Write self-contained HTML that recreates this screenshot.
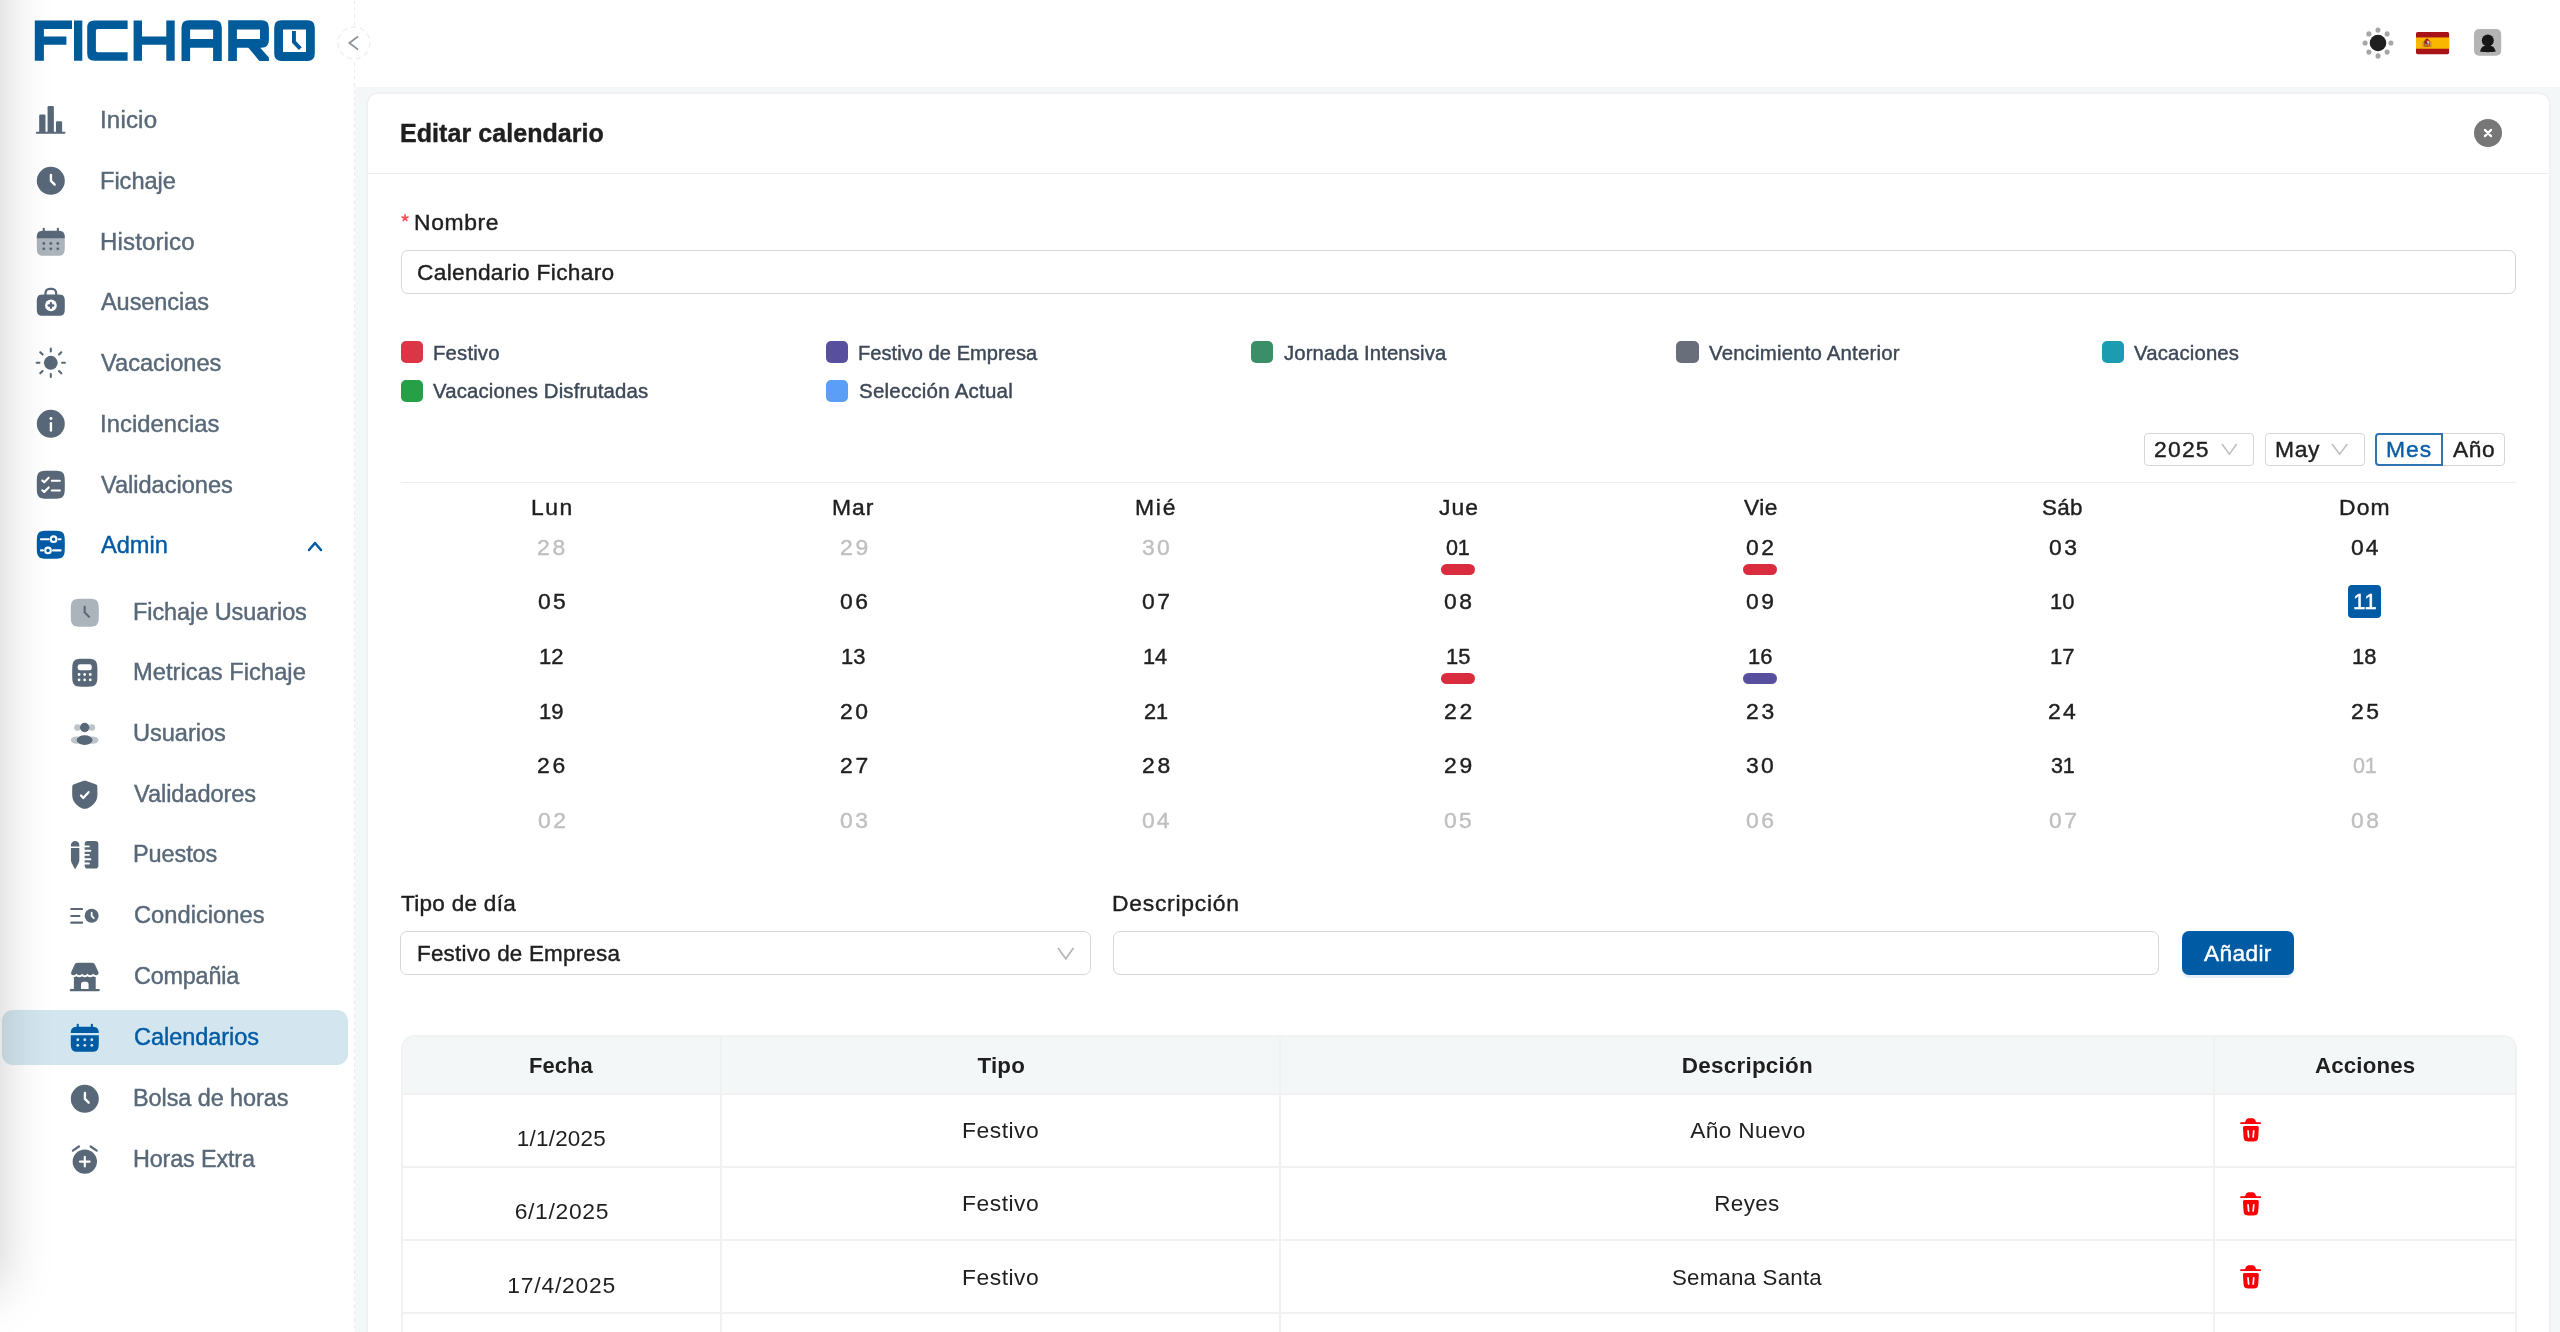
<!DOCTYPE html><html lang="es"><head><meta charset="utf-8"><title>Ficharo - Editar calendario</title><style>
*{box-sizing:border-box;margin:0;padding:0}
html,body{width:2560px;height:1332px;overflow:hidden;background:#fff}
body{position:relative;font-family:"Liberation Sans",sans-serif;color:#1f1f1f}
.abs,.t,.ic,nav li,nav a{position:absolute}
.t{white-space:nowrap;line-height:1;display:block;will-change:transform;-webkit-text-stroke:0.42px}
ul{list-style:none}
a{text-decoration:none;color:inherit}
svg{display:block;overflow:visible}
header.top{position:absolute;left:0;top:0;width:2560px;height:87px;background:#fff}
.sidebg{position:absolute;left:0;top:0;width:355px;height:1332px;background:#fff}
main{position:absolute;left:355px;top:87px;width:2205px;height:1245px;background:#f4f7f8}
aside{position:absolute;left:0;top:0;width:354px;height:1332px}
.dash{position:absolute;left:354px;top:0;width:1px;height:1332px;background:repeating-linear-gradient(to bottom,#ececec 0,#ececec 4px,rgba(255,255,255,.9) 4px,rgba(255,255,255,.9) 6.9px)}
.page{position:absolute;left:0;top:0;width:2560px;height:1332px}
.card{position:absolute;background:#fff;border:2px solid #f1f1f1;border-radius:12px}
.sel{position:absolute;background:#d3e6ef;border-radius:11px}
.inp{position:absolute;background:#fff;border:1px solid #d6d6d6;border-radius:7px}
.sw{position:absolute;border-radius:5px}
.pill{position:absolute;border-radius:6px;height:11px;width:33.8px}
.hr{position:absolute;background:#f0f0f0}
.btn{position:absolute;background:#005ba5;border-radius:7px;box-shadow:0 3px 0 rgba(5,100,200,.10)}
.shade{position:absolute;left:-300px;top:-300px;width:300px;height:1590px;pointer-events:none;box-shadow:0 0 50px rgba(0,0,0,.2)}
table.tb{position:absolute;border-collapse:separate;border-spacing:0;table-layout:fixed;will-change:transform}
table.tb{border-left:2px solid #f1f1f1;border-top:2px solid #f1f1f1;border-radius:14px 14px 0 0}
table.tb th,table.tb td{border-right:2px solid #f1f1f1;border-bottom:2px solid #f1f1f1;text-align:center;vertical-align:top;line-height:1;white-space:nowrap;position:relative}
table.tb th{height:57.5px;background:#f4f7f8;font-weight:700}
table.tb th:first-child{border-top-left-radius:12px}
table.tb th:last-child{border-top-right-radius:12px}
table.tb td{height:73.33px;font-weight:400}
</style></head><body>
<header class="top">
<svg class="ic" style="left:2357.90px;top:22.70px" width="40.00" height="40.00" viewBox="0 0 40 40" ><circle cx="20" cy="20" r="8.3" fill="#1f1f1f"/><circle cx="32.90" cy="20.00" r="2.55" fill="#a6a6a6"/><circle cx="29.12" cy="29.12" r="2.55" fill="#a6a6a6"/><circle cx="20.00" cy="32.90" r="2.55" fill="#a6a6a6"/><circle cx="10.88" cy="29.12" r="2.55" fill="#a6a6a6"/><circle cx="7.10" cy="20.00" r="2.55" fill="#a6a6a6"/><circle cx="10.88" cy="10.88" r="2.55" fill="#a6a6a6"/><circle cx="20.00" cy="7.10" r="2.55" fill="#a6a6a6"/><circle cx="29.12" cy="10.88" r="2.55" fill="#a6a6a6"/></svg>
<svg class="ic" style="left:2416.20px;top:31.80px" width="33.10" height="22.20" viewBox="0 0 33.1 22.2" ><rect width="33.1" height="22.2" rx="1.6" fill="#a8131a"/><rect y="5.44" width="33.1" height="11.32" fill="#fab700"/><g transform="translate(6.6,6.4)"><rect x="1.2" y="1.6" width="6.4" height="7" rx="1.6" fill="#b5521f"/><rect x="2.2" y="2.8" width="2.2" height="2.6" fill="#a8131a"/><rect x="4.4" y="2.8" width="2.2" height="2.6" fill="#d9d2c0"/><rect x="2.2" y="5.4" width="4.4" height="2.4" fill="#c9781f"/><rect x="-0.2" y="3" width="1.3" height="5.8" fill="#c08a4a"/><rect x="7.7" y="3" width="1.3" height="5.8" fill="#c08a4a"/><path d="M2 1.800L4.400 -0.200L6.800 1.800Z" fill="#a8131a"/><rect x="3.5" y="4.2" width="1.8" height="1.8" fill="#51609c"/></g></svg>
<svg class="ic" style="left:2474.30px;top:29.40px" width="27.20" height="26.80" viewBox="0 0 27.2 26.8" ><rect width="27.2" height="26.8" rx="5" fill="#b4b4b4"/><circle cx="13.8" cy="11.5" r="6" fill="#161616"/><path d="M6.1 22.6C6.6 18.4 9.6 16.2 13.8 16.2S21 18.4 21.7 22.6C19 23.4 8.6 23.4 6.1 22.6Z" fill="#161616"/></svg>
</header>
<main></main>
<div class="sidebg"></div><div class="dash"></div>
<section class="page">
<div class="card" style="left:366.00px;top:92.00px;width:2185.00px;height:1300.00px;"></div>
<h1 class="t" style="left:400.23px;top:121px;font-size:25.03px;letter-spacing:0.054px;font-weight:700;">Editar calendario</h1>
<svg class="ic" style="left:2474.10px;top:119.10px" width="28.00" height="28.00" viewBox="0 0 28 28" ><circle cx="14" cy="14" r="14" fill="#777"/><path d="M10.9 10.9L17.1 17.1M17.1 10.9L10.9 17.1" stroke="#fff" stroke-width="2.2" stroke-linecap="round"/></svg>
<div class="hr" style="left:368.00px;top:173.00px;width:2181.00px;height:1.00px;background:#ececec;"></div>
<svg class="ic" style="left:398.90px;top:212.40px" width="12.00" height="12.00" viewBox="0 0 12 12" ><path d="M6 6L6.00 2.30M6 6L9.52 4.86M6 6L8.17 8.99M6 6L3.83 8.99M6 6L2.48 4.86" stroke="#ff4d4f" stroke-width="1.7" stroke-linecap="butt" fill="none"/></svg>
<label class="t" style="left:414.12px;top:211px;font-size:22.89px;letter-spacing:0.617px;">Nombre</label>
<div class="inp" style="left:401.00px;top:250.00px;width:2115.00px;height:44.00px;"></div>
<span class="t" style="left:417.05px;top:261px;font-size:22.70px;letter-spacing:0.325px;">Calendario Ficharo</span>
<div class="sw" style="left:400.50px;top:341.40px;width:22.20px;height:21.80px;background:#dc3545;"></div>
<span class="t" style="left:432.93px;top:343px;font-size:20.36px;letter-spacing:0.150px;color:#3d4857;">Festivo</span>
<div class="sw" style="left:825.80px;top:341.40px;width:22.20px;height:21.80px;background:#58509f;"></div>
<span class="t" style="left:858.25px;top:343px;font-size:20.09px;letter-spacing:0.041px;color:#3d4857;">Festivo de Empresa</span>
<div class="sw" style="left:1251.10px;top:341.40px;width:22.20px;height:21.80px;background:#3a8f68;"></div>
<span class="t" style="left:1283.98px;top:343px;font-size:20.31px;letter-spacing:0.124px;color:#3d4857;">Jornada Intensiva</span>
<div class="sw" style="left:1676.40px;top:341.40px;width:22.20px;height:21.80px;background:#686f7a;"></div>
<span class="t" style="left:1709.01px;top:343px;font-size:20.43px;letter-spacing:0.166px;color:#3d4857;">Vencimiento Anterior</span>
<div class="sw" style="left:2101.70px;top:341.40px;width:22.20px;height:21.80px;background:#1b9cb1;"></div>
<span class="t" style="left:2134.31px;top:343px;font-size:20.34px;letter-spacing:0.153px;color:#3d4857;">Vacaciones</span>
<div class="sw" style="left:400.50px;top:380.00px;width:22.20px;height:21.80px;background:#26a046;"></div>
<span class="t" style="left:433.11px;top:381px;font-size:20.35px;letter-spacing:0.140px;color:#3d4857;">Vacaciones Disfrutadas</span>
<div class="sw" style="left:825.80px;top:380.00px;width:22.20px;height:21.80px;background:#5a9ef8;"></div>
<span class="t" style="left:858.57px;top:381px;font-size:20.53px;letter-spacing:0.211px;color:#3d4857;">Selección Actual</span>
<div class="inp" style="left:2143.50px;top:432.50px;width:110.60px;height:33.30px;border-radius:4px;"></div>
<span class="t" style="left:2154.15px;top:438px;font-size:22.89px;letter-spacing:1.230px;">2025</span>
<svg class="ic" style="left:2222.20px;top:443.80px" width="14.70" height="10.20" viewBox="0 0 14.7 10.2" ><path d="M0 0L7.35 10.20L14.70 0" fill="none" stroke="#bfbfbf" stroke-width="1.6"/></svg>
<div class="inp" style="left:2264.80px;top:432.50px;width:99.90px;height:33.30px;border-radius:4px;"></div>
<span class="t" style="left:2275.13px;top:438px;font-size:22.83px;letter-spacing:0.694px;">May</span>
<svg class="ic" style="left:2332.30px;top:443.80px" width="15.30" height="10.20" viewBox="0 0 15.3 10.2" ><path d="M0 0L7.65 10.20L15.30 0" fill="none" stroke="#bfbfbf" stroke-width="1.6"/></svg>
<div class="inp" style="left:2441.00px;top:432.50px;width:64.20px;height:33.30px;border-radius:0 4px 4px 0;"></div>
<div class="inp" style="left:2375.00px;top:432.50px;width:67.80px;height:33.30px;border-width:2px;border-color:#2f74b0;border-radius:4px 0 0 4px;"></div>
<span class="t" style="left:2386.12px;top:438px;font-size:22.89px;letter-spacing:1.031px;color:#0a5ea6;">Mes</span>
<span class="t" style="left:2452.56px;top:438px;font-size:22.72px;letter-spacing:0.586px;">Año</span>
<div class="hr" style="left:400.60px;top:482.00px;width:2115.00px;height:1.00px;background:#eeeeee;"></div>
<span class="t" style="left:530.62px;top:496px;font-size:22.89px;letter-spacing:1.586px;">Lun</span>
<span class="t" style="left:832.22px;top:496px;font-size:22.89px;letter-spacing:1.018px;">Mar</span>
<span class="t" style="left:1135.27px;top:496px;font-size:22.89px;letter-spacing:1.756px;">Mié</span>
<span class="t" style="left:1438.94px;top:496px;font-size:22.89px;letter-spacing:1.034px;">Jue</span>
<span class="t" style="left:1744.00px;top:496px;font-size:22.78px;letter-spacing:0.500px;">Vie</span>
<span class="t" style="left:2042.18px;top:497px;font-size:22.40px;letter-spacing:0.351px;">Sáb</span>
<span class="t" style="left:2339.17px;top:496px;font-size:22.89px;letter-spacing:1.179px;">Dom</span>
<span class="t" style="left:537.35px;top:536px;font-size:22.89px;letter-spacing:2.685px;color:#bfbfbf;">28</span>
<span class="t" style="left:839.55px;top:536px;font-size:22.89px;letter-spacing:2.775px;color:#bfbfbf;">29</span>
<span class="t" style="left:1142.03px;top:536px;font-size:22.89px;letter-spacing:2.305px;color:#bfbfbf;">30</span>
<span class="t" style="left:1446.36px;top:537px;font-size:21.56px;letter-spacing:-0.287px;">01</span>
<span class="t" style="left:1746.41px;top:536px;font-size:22.89px;letter-spacing:2.585px;">02</span>
<span class="t" style="left:2048.61px;top:536px;font-size:22.89px;letter-spacing:2.439px;">03</span>
<span class="t" style="left:2350.81px;top:536px;font-size:22.89px;letter-spacing:2.104px;">04</span>
<span class="t" style="left:537.61px;top:590px;font-size:22.89px;letter-spacing:2.395px;">05</span>
<span class="t" style="left:839.81px;top:590px;font-size:22.89px;letter-spacing:2.439px;">06</span>
<span class="t" style="left:1142.01px;top:590px;font-size:22.89px;letter-spacing:2.585px;">07</span>
<span class="t" style="left:1444.21px;top:590px;font-size:22.89px;letter-spacing:2.428px;">08</span>
<span class="t" style="left:1746.41px;top:590px;font-size:22.89px;letter-spacing:2.517px;">09</span>
<span class="t" style="left:2049.93px;top:591px;font-size:21.88px;letter-spacing:-0.016px;">10</span>
<div class="abs" style="left:2348.00px;top:585.20px;width:33.20px;height:32.90px;background:#005ba5;border-radius:4px;"></div>
<span class="t" style="left:2352.60px;top:591px;font-size:22.38px;letter-spacing:0.365px;color:#fff;">11</span>
<span class="t" style="left:538.92px;top:646px;font-size:22.02px;letter-spacing:0.092px;">12</span>
<span class="t" style="left:841.13px;top:646px;font-size:21.94px;letter-spacing:0.031px;">13</span>
<span class="t" style="left:1143.34px;top:646px;font-size:21.76px;letter-spacing:-0.109px;">14</span>
<span class="t" style="left:1445.53px;top:646px;font-size:21.92px;letter-spacing:0.008px;">15</span>
<span class="t" style="left:1747.73px;top:646px;font-size:21.94px;letter-spacing:0.031px;">16</span>
<span class="t" style="left:2049.92px;top:646px;font-size:22.02px;letter-spacing:0.092px;">17</span>
<span class="t" style="left:2352.13px;top:646px;font-size:21.93px;letter-spacing:0.030px;">18</span>
<span class="t" style="left:538.93px;top:701px;font-size:21.98px;letter-spacing:0.067px;">19</span>
<span class="t" style="left:839.55px;top:700px;font-size:22.89px;letter-spacing:2.585px;">20</span>
<span class="t" style="left:1143.91px;top:701px;font-size:21.69px;letter-spacing:-0.176px;">21</span>
<span class="t" style="left:1443.95px;top:700px;font-size:22.89px;letter-spacing:2.842px;">22</span>
<span class="t" style="left:1746.15px;top:700px;font-size:22.89px;letter-spacing:2.696px;">23</span>
<span class="t" style="left:2048.35px;top:700px;font-size:22.89px;letter-spacing:2.361px;">24</span>
<span class="t" style="left:2350.55px;top:700px;font-size:22.89px;letter-spacing:2.652px;">25</span>
<span class="t" style="left:537.35px;top:754px;font-size:22.89px;letter-spacing:2.696px;">26</span>
<span class="t" style="left:839.55px;top:754px;font-size:22.89px;letter-spacing:2.842px;">27</span>
<span class="t" style="left:1141.75px;top:754px;font-size:22.89px;letter-spacing:2.685px;">28</span>
<span class="t" style="left:1443.95px;top:754px;font-size:22.89px;letter-spacing:2.775px;">29</span>
<span class="t" style="left:1746.43px;top:754px;font-size:22.89px;letter-spacing:2.305px;">30</span>
<span class="t" style="left:2050.78px;top:755px;font-size:21.55px;letter-spacing:-0.297px;">31</span>
<span class="t" style="left:2352.96px;top:755px;font-size:21.56px;letter-spacing:-0.287px;color:#bfbfbf;">01</span>
<span class="t" style="left:537.61px;top:809px;font-size:22.89px;letter-spacing:2.585px;color:#bfbfbf;">02</span>
<span class="t" style="left:839.81px;top:809px;font-size:22.89px;letter-spacing:2.439px;color:#bfbfbf;">03</span>
<span class="t" style="left:1142.01px;top:809px;font-size:22.89px;letter-spacing:2.104px;color:#bfbfbf;">04</span>
<span class="t" style="left:1444.21px;top:809px;font-size:22.89px;letter-spacing:2.395px;color:#bfbfbf;">05</span>
<span class="t" style="left:1746.41px;top:809px;font-size:22.89px;letter-spacing:2.439px;color:#bfbfbf;">06</span>
<span class="t" style="left:2048.61px;top:809px;font-size:22.89px;letter-spacing:2.585px;color:#bfbfbf;">07</span>
<span class="t" style="left:2350.81px;top:809px;font-size:22.89px;letter-spacing:2.428px;color:#bfbfbf;">08</span>
<div class="pill" style="left:1441.20px;top:563.80px;width:33.80px;height:11.00px;background:#d92d3e;"></div>
<div class="pill" style="left:1743.40px;top:563.80px;width:33.80px;height:11.00px;background:#d92d3e;"></div>
<div class="pill" style="left:1441.20px;top:672.90px;width:33.80px;height:11.00px;background:#d92d3e;"></div>
<div class="pill" style="left:1743.40px;top:672.90px;width:33.80px;height:11.00px;background:#57509f;"></div>
<label class="t" style="left:401.09px;top:893px;font-size:22.57px;letter-spacing:0.272px;">Tipo de día</label>
<div class="inp" style="left:400.00px;top:931.00px;width:691.00px;height:44.00px;"></div>
<span class="t" style="left:417.06px;top:943px;font-size:22.41px;letter-spacing:0.215px;">Festivo de Empresa</span>
<svg class="ic" style="left:1058.00px;top:948.30px" width="15.50" height="10.80" viewBox="0 0 15.5 10.8" ><path d="M0 0L7.75 10.80L15.50 0" fill="none" stroke="#b5b5b5" stroke-width="1.7"/></svg>
<label class="t" style="left:1111.82px;top:892px;font-size:22.89px;letter-spacing:0.738px;">Descripción</label>
<div class="inp" style="left:1112.50px;top:931.00px;width:1046.60px;height:44.00px;"></div>
<button class="btn" style="left:2181.50px;top:931.00px;width:112.40px;height:44.00px;border:0;"></button>
<span class="t" style="left:2204.16px;top:942px;font-size:22.69px;letter-spacing:0.366px;color:#fff;">Añadir</span>
<table class="tb" style="left:400.5px;top:1035.0px;width:2115.5px"><colgroup><col style="width:319.3px"><col style="width:559.1px"><col style="width:933.9px"><col style="width:301.2px"></colgroup><thead><tr><th style="font-size:21.95px;letter-spacing:0.023px;padding-top:18.00px;padding-right:1.59px;">Fecha</th><th style="font-size:22.35px;letter-spacing:0.254px;padding-top:18.00px;padding-left:0.88px;">Tipo</th><th style="font-size:22.44px;letter-spacing:0.244px;padding-top:18.00px;padding-left:0.13px;">Descripción</th><th style="font-size:22.26px;letter-spacing:0.185px;padding-top:18.00px;padding-left:0.54px;">Acciones</th></tr></thead><tbody><tr><td style="font-size:22.46px;letter-spacing:0.247px;padding-top:33.50px;padding-right:0.52px;">1/1/2025</td><td style="font-size:22.89px;letter-spacing:0.493px;padding-top:24.50px;padding-right:0.42px;">Festivo</td><td style="font-size:22.67px;letter-spacing:0.391px;padding-top:24.50px;padding-left:1.30px;">Año Nuevo</td><td class="act"><svg style="position:absolute;left:22.10px;top:21.70px" width="27.80" height="27.80" viewBox="0 0 24 24"><path fill="#fb0007" d="M2.750 6.200c0-.460.340-.830.770-.830h2.660c.530-.010 1-.380 1.180-.920l.140-.470c.070-.230.130-.430.220-.600.340-.700.960-1.190 1.690-1.310.180-.030.370-.030.600-.030h3.480c.220 0 .420 0 .600.030.720.120 1.350.610 1.690 1.310.080.180.150.380.220.600l.140.470c.180.540.740.900 1.270.920h2.570c.430 0 .770.370.770.830S20.400 7 19.980 7H3.520c-.430 0-.770-.370-.770-.800"/><path fill="#fb0007" fill-rule="evenodd" d="M11.600 22h.800c2.700 0 4.060 0 4.940-.860.880-.870.970-2.280 1.150-5.110l.260-4.080c.100-1.540.150-2.310-.300-2.800-.440-.480-1.180-.480-2.670-.480H8.230c-1.490 0-2.240 0-2.680.480-.440.490-.390 1.260-.290 2.800l.260 4.080c.180 2.830.270 4.240 1.150 5.110S8.900 22 11.600 22m-1.350-9.190c-.040-.420-.400-.730-.800-.690s-.690.420-.650.840l.500 5.260c.040.420.400.730.800.690s.690-.420.650-.840zm4.300-.690c.400.040.690.420.650.840l-.500 5.260c-.040.420-.400.730-.800.690s-.690-.420-.650-.840l.500-5.260c.040-.420.400-.730.800-.690"/></svg></td></tr><tr><td style="font-size:22.89px;letter-spacing:0.660px;padding-top:32.17px;padding-left:0.46px;">6/1/2025</td><td style="font-size:22.89px;letter-spacing:0.493px;padding-top:24.17px;padding-right:0.42px;">Festivo</td><td style="font-size:22.47px;letter-spacing:0.316px;padding-top:25.17px;padding-right:0.72px;">Reyes</td><td class="act"><svg style="position:absolute;left:22.10px;top:21.70px" width="27.80" height="27.80" viewBox="0 0 24 24"><path fill="#fb0007" d="M2.750 6.200c0-.460.340-.830.770-.830h2.660c.530-.010 1-.380 1.180-.920l.140-.470c.070-.230.130-.430.220-.600.340-.700.960-1.190 1.690-1.310.180-.030.370-.030.600-.030h3.480c.220 0 .420 0 .600.030.720.120 1.350.610 1.690 1.310.080.180.150.380.220.600l.140.470c.180.540.740.900 1.270.920h2.570c.430 0 .770.370.770.830S20.400 7 19.980 7H3.520c-.430 0-.770-.370-.770-.800"/><path fill="#fb0007" fill-rule="evenodd" d="M11.600 22h.800c2.700 0 4.060 0 4.940-.860.880-.870.970-2.280 1.150-5.110l.260-4.080c.100-1.540.150-2.310-.300-2.800-.440-.480-1.180-.480-2.670-.480H8.230c-1.490 0-2.240 0-2.680.480-.440.490-.390 1.260-.290 2.800l.260 4.080c.180 2.830.270 4.240 1.150 5.110S8.900 22 11.600 22m-1.350-9.190c-.040-.420-.400-.730-.800-.690s-.690.420-.650.840l.500 5.260c.040.420.400.730.800.690s.690-.420.650-.840zm4.300-.690c.400.040.690.420.650.840l-.500 5.260c-.040.420-.400.730-.800.690s-.690-.420-.650-.840l.500-5.260c.040-.420.400-.730.800-.690"/></svg></td></tr><tr><td style="font-size:22.89px;letter-spacing:0.759px;padding-top:32.84px;padding-right:0.02px;">17/4/2025</td><td style="font-size:22.89px;letter-spacing:0.493px;padding-top:24.84px;padding-right:0.42px;">Festivo</td><td style="font-size:22.30px;letter-spacing:0.198px;padding-top:25.84px;padding-right:0.81px;">Semana Santa</td><td class="act"><svg style="position:absolute;left:22.10px;top:21.70px" width="27.80" height="27.80" viewBox="0 0 24 24"><path fill="#fb0007" d="M2.750 6.200c0-.460.340-.830.770-.830h2.660c.530-.010 1-.380 1.180-.920l.140-.470c.070-.230.130-.430.220-.600.340-.700.960-1.190 1.690-1.310.180-.030.370-.030.600-.030h3.480c.220 0 .420 0 .600.030.720.120 1.350.610 1.690 1.310.080.180.150.380.220.600l.140.470c.180.540.740.900 1.270.920h2.570c.430 0 .770.370.770.830S20.400 7 19.980 7H3.520c-.430 0-.770-.370-.770-.800"/><path fill="#fb0007" fill-rule="evenodd" d="M11.600 22h.800c2.700 0 4.060 0 4.940-.860.880-.870.970-2.280 1.150-5.110l.260-4.080c.100-1.540.150-2.310-.300-2.800-.440-.480-1.180-.480-2.670-.480H8.230c-1.490 0-2.240 0-2.680.480-.440.490-.390 1.260-.290 2.800l.260 4.080c.180 2.830.270 4.240 1.150 5.110S8.900 22 11.600 22m-1.350-9.190c-.040-.420-.400-.730-.800-.690s-.690.420-.650.840l.500 5.260c.040.420.400.730.800.690s.690-.420.650-.840zm4.300-.690c.400.040.690.420.650.840l-.500 5.260c-.040.420-.400.730-.800.690s-.690-.420-.650-.840l.500-5.260c.040-.420.400-.730.800-.690"/></svg></td></tr><tr><td style="font-size:22.89px;letter-spacing:0.759px;padding-top:32.51px;padding-right:0.02px;">18/4/2025</td><td style="font-size:22.89px;letter-spacing:0.493px;padding-top:24.51px;padding-right:0.42px;">Festivo</td><td style="font-size:22.24px;letter-spacing:0.144px;padding-top:25.51px;padding-left:0.98px;">Viernes Santo</td><td class="act"><svg style="position:absolute;left:22.10px;top:21.70px" width="27.80" height="27.80" viewBox="0 0 24 24"><path fill="#fb0007" d="M2.750 6.200c0-.460.340-.830.770-.830h2.660c.530-.010 1-.380 1.180-.920l.140-.470c.070-.230.130-.430.220-.600.340-.700.960-1.190 1.690-1.310.180-.030.370-.030.600-.030h3.480c.220 0 .420 0 .600.030.720.120 1.350.610 1.690 1.310.080.180.150.380.220.600l.140.470c.180.540.740.900 1.270.920h2.570c.430 0 .770.370.770.830S20.400 7 19.980 7H3.520c-.430 0-.770-.370-.770-.800"/><path fill="#fb0007" fill-rule="evenodd" d="M11.600 22h.800c2.700 0 4.060 0 4.940-.860.880-.870.970-2.280 1.150-5.110l.260-4.080c.100-1.540.150-2.310-.300-2.800-.440-.480-1.180-.480-2.670-.480H8.230c-1.490 0-2.240 0-2.680.480-.440.490-.390 1.260-.290 2.800l.260 4.080c.180 2.830.270 4.240 1.150 5.110S8.900 22 11.600 22m-1.350-9.190c-.040-.420-.400-.730-.800-.690s-.690.420-.650.840l.500 5.260c.040.420.400.730.800.690s.690-.420.650-.840zm4.300-.690c.400.040.690.420.650.840l-.500 5.260c-.040.420-.400.730-.800.690s-.690-.420-.650-.840l.500-5.260c.040-.420.400-.730.800-.690"/></svg></td></tr></tbody></table>
</section>
<aside>
<svg class="ic" style="left:0.00px;top:0.00px" width="356.00" height="87.00" viewBox="0 0 356 87" role="img" aria-label="FICHARO"><path fill="#005b9b" fill-rule="evenodd" d="M34.8 20.4H72V29H43.9V36.4H66.4V44.8H43.9V60.8H34.8Z M74 20.4H82.3V60.8H74Z M94.4 20.4H127.6V29H97.6Q95.9 29 95.9 30.7V50.5Q95.9 52.2 97.6 52.2H127.6V60.8H94.4Q87.2 60.8 87.2 53.6V27.6Q87.2 20.4 94.4 20.4Z M133.6 20.4H142V36.4H166.3V20.4H174.7V60.8H166.3V44.8H142V60.8H133.6Z M188.9 20.3H214.4Q221.8 20.3 221.8 27.7V60.9H213.1V47.7H190.1V60.9H181.5V27.7Q181.5 20.3 188.9 20.3ZM190.1 29.4V39.1H213.1V29.4Z M228.2 20.3H261.5Q268.9 20.3 268.9 27.7V40.3Q268.9 47.7 261.5 47.7H260.2L268.9 57.6V60.9H259.4L248.3 47.7H236.9V60.9H228.2ZM236.9 29.4V38.9H260V29.4Z M281.6 20.3H307.4Q314.8 20.3 314.8 27.7V53.5Q314.8 60.9 307.4 60.9H281.6Q274.2 60.9 274.2 53.5V27.7Q274.2 20.3 281.6 20.3ZM283 29.4V52H306V29.4Z"/><path fill="none" stroke="#005b9b" stroke-width="3.9" d="M293.95 30.9V41.9L300.3 48.6"/></svg>
<svg class="ic" style="left:335.80px;top:24.80px" width="36.00" height="36.00" viewBox="0 0 36 36" ><circle cx="18" cy="18" r="16" fill="#fff" stroke="#eaf0f3" stroke-width="1.4" stroke-dasharray="5 4"/><path d="M22.1 11.4L13.4 18L22.1 24.6" fill="none" stroke="#8b9096" stroke-width="1.8"/></svg>
<nav><ul>
<li><svg class="ic" style="left:34.20px;top:103.20px" width="33.60" height="33.60" viewBox="0 0 24 24" ><rect x="3.7" y="8.2" width="4.5" height="13" rx="0.9" fill="#586878"/><rect x="9.7" y="2.1" width="4.5" height="19" rx="0.9" fill="#586878"/><rect x="15.7" y="13" width="4.4" height="8" rx="0.9" fill="#586878"/><path d="M2.05 21.25H21.75" stroke="#586878" stroke-width="1.5" stroke-linecap="round"/></svg><a class="t" style="left:99.78px;top:108px;font-size:24.11px;letter-spacing:0.151px;color:#586878;">Inicio</a></li>
<li><svg class="ic" style="left:34.20px;top:164.20px" width="33.60" height="33.60" viewBox="0 0 24 24" ><circle cx="12" cy="12" r="10" fill="#586878"/><path d="M12.1 7.9V12.1L14.8 14.8" fill="none" stroke="#fff" stroke-width="1.7" stroke-linecap="round" stroke-linejoin="round"/></svg><a class="t" style="left:99.96px;top:170px;font-size:23.63px;letter-spacing:-0.031px;color:#586878;">Fichaje</a></li>
<li><svg class="ic" style="left:34.20px;top:225.20px" width="33.60" height="33.60" viewBox="0 0 24 24" ><path fill="#586878" d="M6.96 2c.418 0 .756.31.756.692V4.09c.67-.012 1.422-.012 2.268-.012h4.032c.846 0 1.597 0 2.268.012V2.692c0-.382.338-.692.756-.692s.756.31.756.692V4.15c1.45.106 2.403.368 3.103 1.008c.7.641.985 1.513 1.101 2.842v1.6H2V8c.116-1.329.401-2.2 1.101-2.842c.7-.64 1.652-.902 3.103-1.008V2.692c0-.382.339-.692.756-.692"/><path fill="#586878" opacity=".5" d="M22 14v-2c0-.839-.013-1.735-.026-2.4H2.006c-.013.665-.006 1.561-.006 2.400v2c0 3.771 0 5.657 1.170 6.828C4.343 22 6.229 22 10 22h4c3.770 0 5.657 0 6.828-1.172S22 17.771 22 14"/><circle cx="7" cy="13.2" r="1" fill="#586878"/><circle cx="7" cy="17" r="1" fill="#586878"/><circle cx="12" cy="13.2" r="1" fill="#586878"/><circle cx="12" cy="17" r="1" fill="#586878"/><circle cx="17" cy="13.2" r="1" fill="#586878"/><circle cx="17" cy="17" r="1" fill="#586878"/></svg><a class="t" style="left:100.03px;top:230px;font-size:24.06px;letter-spacing:0.137px;color:#586878;">Historico</a></li>
<li><svg class="ic" style="left:34.20px;top:285.20px" width="33.60" height="33.60" viewBox="0 0 24 24" ><path d="M8.2 7.5V5.6A2.9 2.9 0 0 1 11.1 2.7h1.8A2.9 2.9 0 0 1 15.8 5.6V7.5" fill="none" stroke="#586878" stroke-width="1.6"/><path fill="#586878" d="M2 13.2c0-2.9 0-4.4.95-5.4C3.9 6.8 5.4 6.8 8.4 6.8h7.2c3 0 4.500 0 5.450 1 .95 1 .95 2.500.95 5.400v2.200c0 3.100 0 4.600-1 5.600s-2.500 1-5.600 1H8.600c-3.100 0-4.600 0-5.600-1S2 18.500 2 15.400z"/><circle cx="12.1" cy="14.6" r="4.2" fill="#fff"/><path d="M12.1 13v3.200M10.500 14.600h3.200" stroke="#586878" stroke-width="1.7" stroke-linecap="round"/></svg><a class="t" style="left:101.15px;top:291px;font-size:23.54px;letter-spacing:-0.077px;color:#586878;">Ausencias</a></li>
<li><svg class="ic" style="left:34.20px;top:346.20px" width="33.60" height="33.60" viewBox="0 0 24 24" ><circle cx="12" cy="12" r="4.95" fill="#586878"/><path d="M20.10 12.00L22.10 12.00M17.87 17.87L19.50 19.50M12.00 20.10L12.00 22.10M6.13 17.87L4.50 19.50M3.90 12.00L1.90 12.00M6.13 6.13L4.50 4.50M12.00 3.90L12.00 1.90M17.87 6.13L19.50 4.50" stroke="#586878" stroke-width="1.5" stroke-linecap="round"/></svg><a class="t" style="left:101.30px;top:352px;font-size:23.67px;letter-spacing:-0.017px;color:#586878;">Vacaciones</a></li>
<li><svg class="ic" style="left:34.20px;top:407.20px" width="33.60" height="33.60" viewBox="0 0 24 24" ><circle cx="12" cy="12" r="10" fill="#586878"/><circle cx="12.1" cy="8.2" r="1.05" fill="#fff"/><path d="M12.1 11.6V16.8" stroke="#fff" stroke-width="1.7" stroke-linecap="round"/></svg><a class="t" style="left:99.80px;top:412px;font-size:23.81px;letter-spacing:0.044px;color:#586878;">Incidencias</a></li>
<li><svg class="ic" style="left:34.20px;top:468.20px" width="33.60" height="33.60" viewBox="0 0 24 24" ><path fill="#586878" d="M12 2c-4.714 0-7.071 0-8.536 1.464C2 4.930 2 7.286 2 12s0 7.071 1.464 8.536C4.930 22 7.286 22 12 22s7.071 0 8.536-1.464C22 19.070 22 16.714 22 12s0-7.071-1.464-8.536C19.070 2 16.714 2 12 2"/><path d="M5.9 8.9L7.3 10.2L10.5 6.900M12.700 9.100H18.500M5.900 15.900L7.300 17.200L10.500 13.900M12.700 16.100H18.500" fill="none" stroke="#fff" stroke-width="1.5" stroke-linecap="round" stroke-linejoin="round"/></svg><a class="t" style="left:101.30px;top:474px;font-size:23.62px;letter-spacing:-0.030px;color:#586878;">Validaciones</a></li>
<li><svg class="ic" style="left:34.20px;top:528.20px" width="33.60" height="33.60" viewBox="0 0 24 24" ><path fill="#005ba5" d="M12 2c-4.714 0-7.071 0-8.536 1.464C2 4.930 2 7.286 2 12s0 7.071 1.464 8.536C4.930 22 7.286 22 12 22s7.071 0 8.536-1.464C22 19.070 22 16.714 22 12s0-7.071-1.464-8.536C19.070 2 16.714 2 12 2"/><path d="M5 8H10.600M17.600 8H19M5 16H6.400M13.600 16H19" stroke="#fff" stroke-width="1.5" stroke-linecap="round"/><circle cx="14" cy="8" r="2" fill="none" stroke="#fff" stroke-width="1.5"/><circle cx="10" cy="16" r="2" fill="none" stroke="#fff" stroke-width="1.5"/></svg><a class="t" style="left:101.15px;top:534px;font-size:23.64px;letter-spacing:-0.032px;color:#005ba5;">Admin</a></li>
<svg class="ic" style="left:309.00px;top:543.20px" width="12.00" height="7.00" viewBox="0 0 12 7" ><path d="M0 7.00L6.00 0L12.00 7.00" fill="none" stroke="#005ba5" stroke-width="2.5" stroke-linecap="round" stroke-linejoin="round"/></svg>
<li><svg class="ic" style="left:67.50px;top:596.00px" width="33.60" height="33.60" viewBox="0 0 24 24" ><path fill="#586878" opacity=".5" d="M12 2c-4.714 0-7.071 0-8.536 1.464C2 4.930 2 7.286 2 12s0 7.071 1.464 8.536C4.930 22 7.286 22 12 22s7.071 0 8.536-1.464C22 19.070 22 16.714 22 12s0-7.071-1.464-8.536C19.070 2 16.714 2 12 2"/><path d="M11.9 7.7V11.700L15 14.800" fill="none" stroke="#586878" stroke-width="1.5" stroke-linecap="round" stroke-linejoin="round"/></svg><a class="t" style="left:133.37px;top:601px;font-size:23.50px;letter-spacing:-0.076px;color:#586878;">Fichaje Usuarios</a></li>
<li><svg class="ic" style="left:67.50px;top:656.00px" width="33.60" height="33.60" viewBox="0 0 24 24" ><path fill="#586878" d="M12 2C8 2 5.900 2 4.500 3.400 3 4.900 3 7.300 3 12s0 7.100 1.500 8.600C5.900 22 8 22 12 22s6.100 0 7.500-1.400C21 19.100 21 16.700 21 12s0-7.100-1.500-8.600C18.100 2 16 2 12 2"/><rect x="6.900" y="5.900" width="10.100" height="4.300" rx="1.700" fill="#fff"/><circle cx="7.9" cy="13.2" r="1" fill="#fff"/><circle cx="7.9" cy="17.1" r="1" fill="#fff"/><circle cx="11.9" cy="13.2" r="1" fill="#fff"/><circle cx="11.9" cy="17.1" r="1" fill="#fff"/><circle cx="15.9" cy="13.2" r="1" fill="#fff"/><circle cx="15.9" cy="17.1" r="1" fill="#fff"/></svg><a class="t" style="left:133.35px;top:661px;font-size:23.73px;letter-spacing:0.010px;color:#586878;">Metricas Fichaje</a></li>
<li><svg class="ic" style="left:67.50px;top:717.00px" width="33.60" height="33.60" viewBox="0 0 24 24" ><circle cx="6.700" cy="7.500" r="2.300" fill="#586878" opacity=".4"/><circle cx="17.100" cy="7.500" r="2.300" fill="#586878" opacity=".4"/><ellipse cx="6.300" cy="16.500" rx="4.300" ry="2.600" fill="#586878" opacity=".4"/><ellipse cx="17.500" cy="16.500" rx="4.300" ry="2.600" fill="#586878" opacity=".4"/><ellipse cx="11.900" cy="16.500" rx="5.900" ry="3.600" fill="#fff"/><circle cx="11.900" cy="7.500" r="3.350" fill="#586878"/><ellipse cx="11.900" cy="16.500" rx="5.800" ry="3.500" fill="#586878"/></svg><a class="t" style="left:133.48px;top:722px;font-size:23.61px;letter-spacing:-0.041px;color:#586878;">Usuarios</a></li>
<li><svg class="ic" style="left:67.50px;top:778.00px" width="33.60" height="33.60" viewBox="0 0 24 24" ><path fill="#586878" d="M3 10.417c0-3.198 0-4.797.378-5.335c.377-.537 1.88-1.052 4.887-2.081l.573-.196C10.405 2.268 11.188 2 12 2s1.595.268 3.162.805l.573.196c3.007 1.029 4.51 1.544 4.887 2.081C21 5.620 21 7.220 21 10.417v1.574c0 5.638-4.239 8.375-6.899 9.536C13.380 21.842 13.020 22 12 22s-1.380-.158-2.101-.473C7.239 20.365 3 17.630 3 11.991z"/><path d="M9.300 12.500L10.900 14.300L14.700 10.100" fill="none" stroke="#fff" stroke-width="1.6" stroke-linecap="round" stroke-linejoin="round"/></svg><a class="t" style="left:134.30px;top:783px;font-size:23.57px;letter-spacing:-0.058px;color:#586878;">Validadores</a></li>
<li><svg class="ic" style="left:67.50px;top:838.00px" width="33.60" height="33.60" viewBox="0 0 24 24" ><path fill="#586878" d="M2.100 5.100A3 3 0 0 1 8.100 5.100V6.100H2.100Z"/><path fill="#586878" d="M2.100 7.200H8.100V15.800C8.100 16.700 7.900 17.200 7.500 18L5.600 21.600C5.300 22.100 4.900 22.100 4.600 21.600L2.700 18C2.300 17.200 2.100 16.700 2.100 15.800Z"/><rect x="11.900" y="2.200" width="9.800" height="19.600" rx="2.200" fill="#586878"/><path d="M11.900 6H14.900M11.900 9.100H16M11.900 12.100H14.900M11.900 15.200H16M11.900 18.200H14.900" stroke="#fff" stroke-width="1.300" stroke-linecap="round"/></svg><a class="t" style="left:133.37px;top:843px;font-size:23.51px;letter-spacing:-0.095px;color:#586878;">Puestos</a></li>
<li><svg class="ic" style="left:67.50px;top:899.00px" width="33.60" height="33.60" viewBox="0 0 24 24" ><path d="M2.300 7.100H10.100M2.300 12.100H8.200M2.300 16.900H10.100" stroke="#586878" stroke-width="1.5" stroke-linecap="round"/><circle cx="16.900" cy="12" r="5" fill="#586878"/><path d="M16.900 9.800V12.100L18.400 13.600" fill="none" stroke="#fff" stroke-width="1.300" stroke-linecap="round" stroke-linejoin="round"/></svg><a class="t" style="left:133.70px;top:904px;font-size:23.71px;letter-spacing:0.007px;color:#586878;">Condiciones</a></li>
<li><svg class="ic" style="left:67.50px;top:960.00px" width="33.60" height="33.60" viewBox="0 0 24 24" ><path fill="#586878" d="M7 2H17C18.300 2 19 2.500 19.400 3.600L21.700 8.600C22.200 10 21.300 10.900 20.100 10.900 19.100 10.900 18.400 10.400 18 9.700 17.600 10.400 16.800 10.900 15.900 10.900 15 10.900 14.300 10.400 13.900 9.700 13.500 10.400 12.900 10.900 12 10.900 11.100 10.900 10.500 10.400 10.100 9.700 9.700 10.400 9 10.900 8.100 10.900 7.200 10.900 6.400 10.400 6 9.700 5.600 10.400 4.900 10.900 3.900 10.900 2.700 10.900 1.800 10 2.300 8.600L4.600 3.600C5 2.500 5.700 2 7 2Z"/><path fill="#586878" d="M4.200 12.100C4.900 12.200 5.500 12 6 11.600 6.600 12.100 7.300 12.300 8.100 12.300 8.800 12.300 9.500 12.100 10.100 11.600 10.600 12.100 11.300 12.300 12 12.300 12.700 12.300 13.400 12.100 13.900 11.600 14.500 12.100 15.200 12.300 15.900 12.300 16.700 12.300 17.400 12.100 18 11.600 18.500 12 19.100 12.200 19.800 12.100V20.700H14.700V17.400C14.700 16.200 14.100 15.600 12.900 15.600H11.100C9.900 15.600 9.300 16.200 9.300 17.400V20.700H4.200Z"/><path d="M2 21.500H22" stroke="#586878" stroke-width="1.600" stroke-linecap="round"/></svg><a class="t" style="left:133.71px;top:965px;font-size:23.36px;letter-spacing:-0.185px;color:#586878;">Compañia</a></li>
<li><div class="sel" style="left:1.50px;top:1010.20px;width:346.50px;height:54.60px;"></div><svg class="ic" style="left:67.50px;top:1021.00px" width="33.60" height="33.60" viewBox="0 0 24 24" ><path fill="#005ba5" d="M6.96 2c.418 0 .756.31.756.692V4.09c.67-.012 1.422-.012 2.268-.012h4.032c.846 0 1.597 0 2.268.012V2.692c0-.382.338-.692.756-.692s.756.31.756.692V4.15c1.45.106 2.403.368 3.103 1.008c.7.641.985 1.513 1.101 2.842v.6H2V8c.116-1.329.401-2.2 1.101-2.842c.7-.64 1.652-.902 3.103-1.008V2.692c0-.382.339-.692.756-.692"/><path fill="#005ba5" d="M22 14v-2c0-.839-.003-1.135-.016-1.800H2.006c-.013.665-.006.961-.006 1.800v2c0 3.771 0 5.657 1.170 6.828C4.343 22 6.229 22 10 22h4c3.770 0 5.657 0 6.828-1.172S22 17.771 22 14"/><circle cx="7" cy="13.4" r="1" fill="#d3e6ee"/><circle cx="7" cy="17.4" r="1" fill="#d3e6ee"/><circle cx="12" cy="13.4" r="1" fill="#d3e6ee"/><circle cx="12" cy="17.4" r="1" fill="#d3e6ee"/><circle cx="17" cy="13.4" r="1" fill="#d3e6ee"/><circle cx="17" cy="17.4" r="1" fill="#d3e6ee"/></svg><a class="t" style="left:133.70px;top:1026px;font-size:23.56px;letter-spacing:-0.058px;color:#005ba5;">Calendarios</a></li>
<li><svg class="ic" style="left:67.50px;top:1082.00px" width="33.60" height="33.60" viewBox="0 0 24 24" ><circle cx="12" cy="12" r="10" fill="#586878"/><path d="M12.1 7.9V12.1L14.8 14.8" fill="none" stroke="#fff" stroke-width="1.7" stroke-linecap="round" stroke-linejoin="round"/></svg><a class="t" style="left:133.37px;top:1087px;font-size:23.47px;letter-spacing:-0.092px;color:#586878;">Bolsa de horas</a></li>
<li><svg class="ic" style="left:67.50px;top:1143.00px" width="33.60" height="33.60" viewBox="0 0 24 24" ><circle cx="12" cy="13.300" r="8.700" fill="#586878"/><path d="M12 9.800V16.800M8.500 13.300H15.500" stroke="#fff" stroke-width="1.500" stroke-linecap="round"/><path d="M3.500 5.400L7.800 2.500M16.200 2.500L20.500 5.400" stroke="#586878" stroke-width="1.600" stroke-linecap="round"/></svg><a class="t" style="left:133.38px;top:1148px;font-size:23.36px;letter-spacing:-0.141px;color:#586878;">Horas Extra</a></li>
</ul></nav>
</aside>
<div class="shade"></div>
</body></html>
